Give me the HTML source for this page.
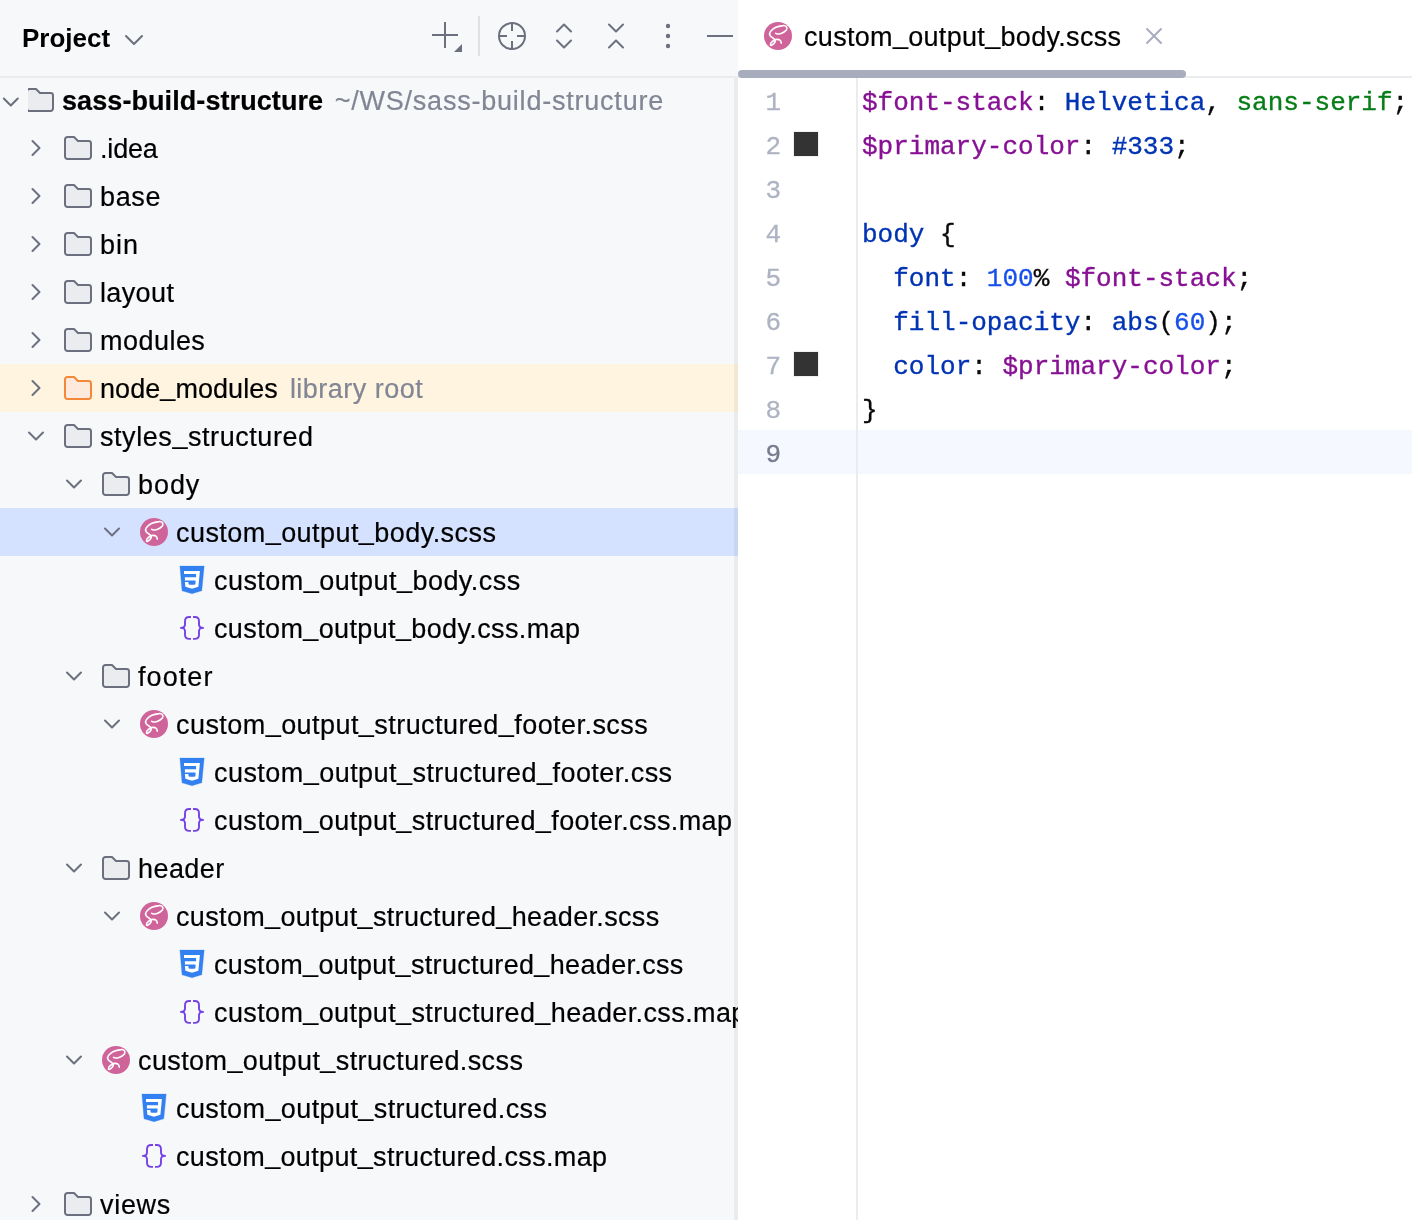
<!DOCTYPE html>
<html><head><meta charset="utf-8"><style>
html,body{margin:0;padding:0;width:1412px;height:1220px;overflow:hidden;background:#fff}
body{position:relative;font-family:"Liberation Sans",sans-serif;}
.aa{will-change:transform}
.u{position:relative;top:-3px}
#left{position:absolute;left:0;top:0;width:738px;height:1220px;background:#F7F8FA;overflow:hidden}
#tree{position:absolute;left:0;top:0;width:738px;height:1220px;overflow:hidden}
.bg{position:absolute;left:0;width:738px;height:48px}
.ic{position:absolute;overflow:visible}
.t{position:absolute;-webkit-text-stroke:0.2px currentColor;height:48px;line-height:48px;font-size:27px;color:#000;white-space:pre;letter-spacing:0.37px}
.t.b{font-weight:bold;letter-spacing:0px}
.g{color:#818594;font-weight:normal;letter-spacing:0.67px}
.ln{position:absolute;left:741px;width:40px;-webkit-text-stroke:0.3px currentColor;text-align:right;height:44px;line-height:44px;font-family:"Liberation Mono",monospace;font-size:26px}
.code{position:absolute;left:862px;-webkit-text-stroke:0.35px currentColor;height:44px;line-height:44px;font-family:"Liberation Mono",monospace;font-size:26px;white-space:pre;color:#080808}
</style></head><body>
<div id="left">
  <div class="aa" style="position:absolute;left:22px;top:0;height:76px;line-height:76px;font-size:26px;font-weight:bold;color:#000">Project</div>
  <svg class="ic" style="left:0;top:0" width="738" height="76">
    <path d="M126 36L134 44L142 36" fill="none" stroke="#6C707E" stroke-width="2" stroke-linecap="round" stroke-linejoin="round"/>
    <path d="M432 35H458M445 22V48" stroke="#6C707E" stroke-width="2"/>
    <path d="M462 44V52H454Z" fill="#6C707E"/>
    <rect x="478" y="16" width="2" height="40" fill="#DFE1E5"/>
    <circle cx="512" cy="36" r="13" fill="none" stroke="#6C707E" stroke-width="2"/>
    <path d="M512 23V31M512 41V49M499 36H507M517 36H525" stroke="#6C707E" stroke-width="2"/>
    <path d="M557 31.5L564 24.5L571 31.5M557 40.5L564 47.5L571 40.5" fill="none" stroke="#6C707E" stroke-width="2" stroke-linecap="round" stroke-linejoin="round"/>
    <path d="M609 24.5L616 31.5L623 24.5M609 47.5L616 40.5L623 47.5" fill="none" stroke="#6C707E" stroke-width="2" stroke-linecap="round" stroke-linejoin="round"/>
    <circle cx="668" cy="26" r="2.2" fill="#6C707E"/><circle cx="668" cy="36" r="2.2" fill="#6C707E"/><circle cx="668" cy="46" r="2.2" fill="#6C707E"/>
    <path d="M707 36H733" stroke="#6C707E" stroke-width="2"/>
  </svg>
  <div id="tree">
  <svg class="ic" style="left:24px;top:84px;clip-path:inset(0 0 0 4px);" width="32" height="32" viewBox="0 0 16 16"><path d="M1.5 3.7a1.2 1.2 0 0 1 1.2-1.2H6L8 4.5H13.3a1.2 1.2 0 0 1 1.2 1.2V12.3a1.2 1.2 0 0 1-1.2 1.2H2.7a1.2 1.2 0 0 1-1.2-1.2Z" fill="#EBECF0" stroke="#6C707E" stroke-width="1" stroke-linejoin="round"/></svg><div class="t b aa" style="left:62px;top:77px;letter-spacing:0.08px">sass-build-structure<span class="g" style="margin-left:11.5px;letter-spacing:0.78px">~/WS/sass-build-structure</span></div><svg class="ic" style="left:62px;top:132px;" width="32" height="32" viewBox="0 0 16 16"><path d="M1.5 3.7a1.2 1.2 0 0 1 1.2-1.2H6L8 4.5H13.3a1.2 1.2 0 0 1 1.2 1.2V12.3a1.2 1.2 0 0 1-1.2 1.2H2.7a1.2 1.2 0 0 1-1.2-1.2Z" fill="#EBECF0" stroke="#6C707E" stroke-width="1" stroke-linejoin="round"/></svg><div class="t aa" style="left:100px;top:125px;letter-spacing:-0.18px">.idea</div><svg class="ic" style="left:62px;top:180px;" width="32" height="32" viewBox="0 0 16 16"><path d="M1.5 3.7a1.2 1.2 0 0 1 1.2-1.2H6L8 4.5H13.3a1.2 1.2 0 0 1 1.2 1.2V12.3a1.2 1.2 0 0 1-1.2 1.2H2.7a1.2 1.2 0 0 1-1.2-1.2Z" fill="#EBECF0" stroke="#6C707E" stroke-width="1" stroke-linejoin="round"/></svg><div class="t aa" style="left:100px;top:173px;letter-spacing:0.64px">base</div><svg class="ic" style="left:62px;top:228px;" width="32" height="32" viewBox="0 0 16 16"><path d="M1.5 3.7a1.2 1.2 0 0 1 1.2-1.2H6L8 4.5H13.3a1.2 1.2 0 0 1 1.2 1.2V12.3a1.2 1.2 0 0 1-1.2 1.2H2.7a1.2 1.2 0 0 1-1.2-1.2Z" fill="#EBECF0" stroke="#6C707E" stroke-width="1" stroke-linejoin="round"/></svg><div class="t aa" style="left:100px;top:221px;letter-spacing:1.0px">bin</div><svg class="ic" style="left:62px;top:276px;" width="32" height="32" viewBox="0 0 16 16"><path d="M1.5 3.7a1.2 1.2 0 0 1 1.2-1.2H6L8 4.5H13.3a1.2 1.2 0 0 1 1.2 1.2V12.3a1.2 1.2 0 0 1-1.2 1.2H2.7a1.2 1.2 0 0 1-1.2-1.2Z" fill="#EBECF0" stroke="#6C707E" stroke-width="1" stroke-linejoin="round"/></svg><div class="t aa" style="left:100px;top:269px;letter-spacing:0.37px">layout</div><svg class="ic" style="left:62px;top:324px;" width="32" height="32" viewBox="0 0 16 16"><path d="M1.5 3.7a1.2 1.2 0 0 1 1.2-1.2H6L8 4.5H13.3a1.2 1.2 0 0 1 1.2 1.2V12.3a1.2 1.2 0 0 1-1.2 1.2H2.7a1.2 1.2 0 0 1-1.2-1.2Z" fill="#EBECF0" stroke="#6C707E" stroke-width="1" stroke-linejoin="round"/></svg><div class="t aa" style="left:100px;top:317px;letter-spacing:0.47px">modules</div><div class="bg" style="top:364px;background:#FEF4E0"></div><svg class="ic" style="left:62px;top:372px;" width="32" height="32" viewBox="0 0 16 16"><path d="M1.5 3.7a1.2 1.2 0 0 1 1.2-1.2H6L8 4.5H13.3a1.2 1.2 0 0 1 1.2 1.2V12.3a1.2 1.2 0 0 1-1.2 1.2H2.7a1.2 1.2 0 0 1-1.2-1.2Z" fill="#FDEADC" stroke="#F3883A" stroke-width="1" stroke-linejoin="round"/></svg><div class="t aa" style="left:100px;top:365px;letter-spacing:0.06px">node<span class="u">_</span>modules<span class="g" style="margin-left:12px;letter-spacing:0.49px">library root</span></div><svg class="ic" style="left:62px;top:420px;" width="32" height="32" viewBox="0 0 16 16"><path d="M1.5 3.7a1.2 1.2 0 0 1 1.2-1.2H6L8 4.5H13.3a1.2 1.2 0 0 1 1.2 1.2V12.3a1.2 1.2 0 0 1-1.2 1.2H2.7a1.2 1.2 0 0 1-1.2-1.2Z" fill="#EBECF0" stroke="#6C707E" stroke-width="1" stroke-linejoin="round"/></svg><div class="t aa" style="left:100px;top:413px;letter-spacing:0.56px">styles<span class="u">_</span>structured</div><svg class="ic" style="left:100px;top:468px;" width="32" height="32" viewBox="0 0 16 16"><path d="M1.5 3.7a1.2 1.2 0 0 1 1.2-1.2H6L8 4.5H13.3a1.2 1.2 0 0 1 1.2 1.2V12.3a1.2 1.2 0 0 1-1.2 1.2H2.7a1.2 1.2 0 0 1-1.2-1.2Z" fill="#EBECF0" stroke="#6C707E" stroke-width="1" stroke-linejoin="round"/></svg><div class="t aa" style="left:138px;top:461px;letter-spacing:0.94px">body</div><div class="bg" style="top:508px;background:#D4E2FF"></div><svg class="ic" style="left:138px;top:516px" width="32" height="32" viewBox="0 0 16 16"><circle cx="8" cy="8" r="7" fill="#CF649A"/><path d="M6.8 6.7C8 7.5 11 6.5 12.2 5C13 3.8 12 2.6 10.5 2.8C8.5 3 5.5 4 4.2 5.8C3.2 7.2 4.2 8.3 5.5 9C6.8 9.8 7 10.5 6.2 11.5C5.5 12.4 4.5 13 4.2 12.5C3.9 11.8 5.5 10 7.2 9.7C8.5 9.5 9.8 10.3 9.6 11.6" fill="none" stroke="#fff" stroke-width="0.8" stroke-linecap="round"/></svg><div class="t aa" style="left:176px;top:509px;letter-spacing:0.44px">custom<span class="u">_</span>output<span class="u">_</span>body.scss</div><svg class="ic" style="left:176px;top:564px" width="32" height="32" viewBox="0 0 16 16"><path d="M1.95 1.05H14.1L12.9 13.4L8 14.85L3 13.4Z" fill="#3381F0" stroke="#3381F0" stroke-width="0.15" stroke-linejoin="round"/><path d="M4 3.5H11.95L11.2 11.4L8 12.35L4.7 11.4L4.45 9H6.2V9.6Q6.2 10.35 7 10.35H9Q9.75 10.35 9.75 9.6V8.3H4.45V6.6H10.05V5.05H4Z" fill="#fff"/></svg><div class="t aa" style="left:214px;top:557px;letter-spacing:0.45px">custom<span class="u">_</span>output<span class="u">_</span>body.css</div><svg class="ic" style="left:176px;top:612px" width="32" height="32" viewBox="0 0 16 16"><path d="M7.5 2.5H6.6C5.3 2.5 4.5 3.3 4.5 4.6V6.3C4.5 7.3 3.6 7.95 2.45 7.95C3.6 7.95 4.5 8.6 4.5 9.6V11.4C4.5 12.7 5.3 13.45 6.6 13.45H7.5M8.5 2.5H9.4C10.7 2.5 11.5 3.3 11.5 4.6V6.3C11.5 7.3 12.4 7.95 13.55 7.95C12.4 7.95 11.5 8.6 11.5 9.6V11.4C11.5 12.7 10.7 13.45 9.4 13.45H8.5" fill="none" stroke="#7442E8" stroke-width="0.95" stroke-linejoin="round"/></svg><div class="t aa" style="left:214px;top:605px;letter-spacing:0.37px">custom<span class="u">_</span>output<span class="u">_</span>body.css.map</div><svg class="ic" style="left:100px;top:660px;" width="32" height="32" viewBox="0 0 16 16"><path d="M1.5 3.7a1.2 1.2 0 0 1 1.2-1.2H6L8 4.5H13.3a1.2 1.2 0 0 1 1.2 1.2V12.3a1.2 1.2 0 0 1-1.2 1.2H2.7a1.2 1.2 0 0 1-1.2-1.2Z" fill="#EBECF0" stroke="#6C707E" stroke-width="1" stroke-linejoin="round"/></svg><div class="t aa" style="left:138px;top:653px;letter-spacing:1.07px">footer</div><svg class="ic" style="left:138px;top:708px" width="32" height="32" viewBox="0 0 16 16"><circle cx="8" cy="8" r="7" fill="#CF649A"/><path d="M6.8 6.7C8 7.5 11 6.5 12.2 5C13 3.8 12 2.6 10.5 2.8C8.5 3 5.5 4 4.2 5.8C3.2 7.2 4.2 8.3 5.5 9C6.8 9.8 7 10.5 6.2 11.5C5.5 12.4 4.5 13 4.2 12.5C3.9 11.8 5.5 10 7.2 9.7C8.5 9.5 9.8 10.3 9.6 11.6" fill="none" stroke="#fff" stroke-width="0.8" stroke-linecap="round"/></svg><div class="t aa" style="left:176px;top:701px;letter-spacing:0.44px">custom<span class="u">_</span>output<span class="u">_</span>structured<span class="u">_</span>footer.scss</div><svg class="ic" style="left:176px;top:756px" width="32" height="32" viewBox="0 0 16 16"><path d="M1.95 1.05H14.1L12.9 13.4L8 14.85L3 13.4Z" fill="#3381F0" stroke="#3381F0" stroke-width="0.15" stroke-linejoin="round"/><path d="M4 3.5H11.95L11.2 11.4L8 12.35L4.7 11.4L4.45 9H6.2V9.6Q6.2 10.35 7 10.35H9Q9.75 10.35 9.75 9.6V8.3H4.45V6.6H10.05V5.05H4Z" fill="#fff"/></svg><div class="t aa" style="left:214px;top:749px;letter-spacing:0.45px">custom<span class="u">_</span>output<span class="u">_</span>structured<span class="u">_</span>footer.css</div><svg class="ic" style="left:176px;top:804px" width="32" height="32" viewBox="0 0 16 16"><path d="M7.5 2.5H6.6C5.3 2.5 4.5 3.3 4.5 4.6V6.3C4.5 7.3 3.6 7.95 2.45 7.95C3.6 7.95 4.5 8.6 4.5 9.6V11.4C4.5 12.7 5.3 13.45 6.6 13.45H7.5M8.5 2.5H9.4C10.7 2.5 11.5 3.3 11.5 4.6V6.3C11.5 7.3 12.4 7.95 13.55 7.95C12.4 7.95 11.5 8.6 11.5 9.6V11.4C11.5 12.7 10.7 13.45 9.4 13.45H8.5" fill="none" stroke="#7442E8" stroke-width="0.95" stroke-linejoin="round"/></svg><div class="t aa" style="left:214px;top:797px;letter-spacing:0.4px">custom<span class="u">_</span>output<span class="u">_</span>structured<span class="u">_</span>footer.css.map</div><svg class="ic" style="left:100px;top:852px;" width="32" height="32" viewBox="0 0 16 16"><path d="M1.5 3.7a1.2 1.2 0 0 1 1.2-1.2H6L8 4.5H13.3a1.2 1.2 0 0 1 1.2 1.2V12.3a1.2 1.2 0 0 1-1.2 1.2H2.7a1.2 1.2 0 0 1-1.2-1.2Z" fill="#EBECF0" stroke="#6C707E" stroke-width="1" stroke-linejoin="round"/></svg><div class="t aa" style="left:138px;top:845px;letter-spacing:0.43px">header</div><svg class="ic" style="left:138px;top:900px" width="32" height="32" viewBox="0 0 16 16"><circle cx="8" cy="8" r="7" fill="#CF649A"/><path d="M6.8 6.7C8 7.5 11 6.5 12.2 5C13 3.8 12 2.6 10.5 2.8C8.5 3 5.5 4 4.2 5.8C3.2 7.2 4.2 8.3 5.5 9C6.8 9.8 7 10.5 6.2 11.5C5.5 12.4 4.5 13 4.2 12.5C3.9 11.8 5.5 10 7.2 9.7C8.5 9.5 9.8 10.3 9.6 11.6" fill="none" stroke="#fff" stroke-width="0.8" stroke-linecap="round"/></svg><div class="t aa" style="left:176px;top:893px;letter-spacing:0.34px">custom<span class="u">_</span>output<span class="u">_</span>structured<span class="u">_</span>header.scss</div><svg class="ic" style="left:176px;top:948px" width="32" height="32" viewBox="0 0 16 16"><path d="M1.95 1.05H14.1L12.9 13.4L8 14.85L3 13.4Z" fill="#3381F0" stroke="#3381F0" stroke-width="0.15" stroke-linejoin="round"/><path d="M4 3.5H11.95L11.2 11.4L8 12.35L4.7 11.4L4.45 9H6.2V9.6Q6.2 10.35 7 10.35H9Q9.75 10.35 9.75 9.6V8.3H4.45V6.6H10.05V5.05H4Z" fill="#fff"/></svg><div class="t aa" style="left:214px;top:941px;letter-spacing:0.34px">custom<span class="u">_</span>output<span class="u">_</span>structured<span class="u">_</span>header.css</div><svg class="ic" style="left:176px;top:996px" width="32" height="32" viewBox="0 0 16 16"><path d="M7.5 2.5H6.6C5.3 2.5 4.5 3.3 4.5 4.6V6.3C4.5 7.3 3.6 7.95 2.45 7.95C3.6 7.95 4.5 8.6 4.5 9.6V11.4C4.5 12.7 5.3 13.45 6.6 13.45H7.5M8.5 2.5H9.4C10.7 2.5 11.5 3.3 11.5 4.6V6.3C11.5 7.3 12.4 7.95 13.55 7.95C12.4 7.95 11.5 8.6 11.5 9.6V11.4C11.5 12.7 10.7 13.45 9.4 13.45H8.5" fill="none" stroke="#7442E8" stroke-width="0.95" stroke-linejoin="round"/></svg><div class="t aa" style="left:214px;top:989px;letter-spacing:0.38px">custom<span class="u">_</span>output<span class="u">_</span>structured<span class="u">_</span>header.css.map</div><svg class="ic" style="left:100px;top:1044px" width="32" height="32" viewBox="0 0 16 16"><circle cx="8" cy="8" r="7" fill="#CF649A"/><path d="M6.8 6.7C8 7.5 11 6.5 12.2 5C13 3.8 12 2.6 10.5 2.8C8.5 3 5.5 4 4.2 5.8C3.2 7.2 4.2 8.3 5.5 9C6.8 9.8 7 10.5 6.2 11.5C5.5 12.4 4.5 13 4.2 12.5C3.9 11.8 5.5 10 7.2 9.7C8.5 9.5 9.8 10.3 9.6 11.6" fill="none" stroke="#fff" stroke-width="0.8" stroke-linecap="round"/></svg><div class="t aa" style="left:138px;top:1037px;letter-spacing:0.4px">custom<span class="u">_</span>output<span class="u">_</span>structured.scss</div><svg class="ic" style="left:138px;top:1092px" width="32" height="32" viewBox="0 0 16 16"><path d="M1.95 1.05H14.1L12.9 13.4L8 14.85L3 13.4Z" fill="#3381F0" stroke="#3381F0" stroke-width="0.15" stroke-linejoin="round"/><path d="M4 3.5H11.95L11.2 11.4L8 12.35L4.7 11.4L4.45 9H6.2V9.6Q6.2 10.35 7 10.35H9Q9.75 10.35 9.75 9.6V8.3H4.45V6.6H10.05V5.05H4Z" fill="#fff"/></svg><div class="t aa" style="left:176px;top:1085px;letter-spacing:0.4px">custom<span class="u">_</span>output<span class="u">_</span>structured.css</div><svg class="ic" style="left:138px;top:1140px" width="32" height="32" viewBox="0 0 16 16"><path d="M7.5 2.5H6.6C5.3 2.5 4.5 3.3 4.5 4.6V6.3C4.5 7.3 3.6 7.95 2.45 7.95C3.6 7.95 4.5 8.6 4.5 9.6V11.4C4.5 12.7 5.3 13.45 6.6 13.45H7.5M8.5 2.5H9.4C10.7 2.5 11.5 3.3 11.5 4.6V6.3C11.5 7.3 12.4 7.95 13.55 7.95C12.4 7.95 11.5 8.6 11.5 9.6V11.4C11.5 12.7 10.7 13.45 9.4 13.45H8.5" fill="none" stroke="#7442E8" stroke-width="0.95" stroke-linejoin="round"/></svg><div class="t aa" style="left:176px;top:1133px;letter-spacing:0.35px">custom<span class="u">_</span>output<span class="u">_</span>structured.css.map</div><svg class="ic" style="left:62px;top:1188px;" width="32" height="32" viewBox="0 0 16 16"><path d="M1.5 3.7a1.2 1.2 0 0 1 1.2-1.2H6L8 4.5H13.3a1.2 1.2 0 0 1 1.2 1.2V12.3a1.2 1.2 0 0 1-1.2 1.2H2.7a1.2 1.2 0 0 1-1.2-1.2Z" fill="#EBECF0" stroke="#6C707E" stroke-width="1" stroke-linejoin="round"/></svg><div class="t aa" style="left:100px;top:1181px;letter-spacing:0.7px">views</div>
  <svg class="ic" style="left:0;top:0" width="736" height="1220"><path d="M3.8000000000000007 98.5L10.8 105.5L17.8 98.5" fill="none" stroke="#6C707E" stroke-width="2" stroke-linecap="round" stroke-linejoin="round"/><path d="M32.5 141L39.5 148L32.5 155" fill="none" stroke="#6C707E" stroke-width="2" stroke-linecap="round" stroke-linejoin="round"/><path d="M32.5 189L39.5 196L32.5 203" fill="none" stroke="#6C707E" stroke-width="2" stroke-linecap="round" stroke-linejoin="round"/><path d="M32.5 237L39.5 244L32.5 251" fill="none" stroke="#6C707E" stroke-width="2" stroke-linecap="round" stroke-linejoin="round"/><path d="M32.5 285L39.5 292L32.5 299" fill="none" stroke="#6C707E" stroke-width="2" stroke-linecap="round" stroke-linejoin="round"/><path d="M32.5 333L39.5 340L32.5 347" fill="none" stroke="#6C707E" stroke-width="2" stroke-linecap="round" stroke-linejoin="round"/><path d="M32.5 381L39.5 388L32.5 395" fill="none" stroke="#6C707E" stroke-width="2" stroke-linecap="round" stroke-linejoin="round"/><path d="M29 432.5L36 439.5L43 432.5" fill="none" stroke="#6C707E" stroke-width="2" stroke-linecap="round" stroke-linejoin="round"/><path d="M67 480.5L74 487.5L81 480.5" fill="none" stroke="#6C707E" stroke-width="2" stroke-linecap="round" stroke-linejoin="round"/><path d="M105 528.5L112 535.5L119 528.5" fill="none" stroke="#6C707E" stroke-width="2" stroke-linecap="round" stroke-linejoin="round"/><path d="M67 672.5L74 679.5L81 672.5" fill="none" stroke="#6C707E" stroke-width="2" stroke-linecap="round" stroke-linejoin="round"/><path d="M105 720.5L112 727.5L119 720.5" fill="none" stroke="#6C707E" stroke-width="2" stroke-linecap="round" stroke-linejoin="round"/><path d="M67 864.5L74 871.5L81 864.5" fill="none" stroke="#6C707E" stroke-width="2" stroke-linecap="round" stroke-linejoin="round"/><path d="M105 912.5L112 919.5L119 912.5" fill="none" stroke="#6C707E" stroke-width="2" stroke-linecap="round" stroke-linejoin="round"/><path d="M67 1056.5L74 1063.5L81 1056.5" fill="none" stroke="#6C707E" stroke-width="2" stroke-linecap="round" stroke-linejoin="round"/><path d="M32.5 1197L39.5 1204L32.5 1211" fill="none" stroke="#6C707E" stroke-width="2" stroke-linecap="round" stroke-linejoin="round"/></svg>
  </div>
  <div style="position:absolute;left:0;top:76px;width:738px;height:2px;background:#EBECF0"></div>
  <div style="position:absolute;left:734px;top:78px;width:4px;height:1142px;background:rgba(0,0,0,0.05)"></div>
</div>
<div id="editor" style="position:absolute;left:738px;top:0;width:674px;height:1220px;background:#fff">
</div>
<div style="position:absolute;left:738px;top:76px;width:674px;height:2px;background:#EBECF0"></div>
<div style="position:absolute;left:738px;top:70px;width:448px;height:8px;background:#A8ADBD;border-radius:4px"></div>
<svg class="ic" style="left:762px;top:20px" width="32" height="32" viewBox="0 0 16 16"><circle cx="8" cy="8" r="7" fill="#CF649A"/><path d="M6.8 6.7C8 7.5 11 6.5 12.2 5C13 3.8 12 2.6 10.5 2.8C8.5 3 5.5 4 4.2 5.8C3.2 7.2 4.2 8.3 5.5 9C6.8 9.8 7 10.5 6.2 11.5C5.5 12.4 4.5 13 4.2 12.5C3.9 11.8 5.5 10 7.2 9.7C8.5 9.5 9.8 10.3 9.6 11.6" fill="none" stroke="#fff" stroke-width="0.8" stroke-linecap="round"/></svg>
<div class="aa" style="position:absolute;left:804px;top:0;height:75px;line-height:75px;font-size:27px;color:#000;white-space:pre;letter-spacing:0.31px;-webkit-text-stroke:0.2px #000">custom<span class="u">_</span>output<span class="u">_</span>body.scss</div>
<svg class="ic" style="left:0;top:0" width="1412" height="76"><path d="M1147 29L1161 43M1161 29L1147 43" stroke="#A8ADBD" stroke-width="2" stroke-linecap="round"/></svg>
<div style="position:absolute;left:738px;top:430px;width:674px;height:44px;background:#F5F8FE"></div>
<div style="position:absolute;left:856px;top:78px;width:2px;height:1142px;background:#EBECF0"></div>
<div style="position:absolute;left:794px;top:132px;width:24px;height:24px;background:#333;box-shadow:0 0 0 1px rgba(0,0,0,0.06)"></div>
<div style="position:absolute;left:794px;top:352px;width:24px;height:24px;background:#333;box-shadow:0 0 0 1px rgba(0,0,0,0.06)"></div>
<div class="ln aa" style="top:81px;color:#AEB3C2">1</div><div class="code aa" style="top:81px"><span style="color:#871094">$font-stack</span><span style="color:#080808">: </span><span style="color:#0033B3">Helvetica</span><span style="color:#080808">, </span><span style="color:#067D17">sans-serif</span><span style="color:#080808">;</span></div><div class="ln aa" style="top:125px;color:#AEB3C2">2</div><div class="code aa" style="top:125px"><span style="color:#871094">$primary-color</span><span style="color:#080808">: </span><span style="color:#0033B3">#333</span><span style="color:#080808">;</span></div><div class="ln aa" style="top:169px;color:#AEB3C2">3</div><div class="code aa" style="top:169px"></div><div class="ln aa" style="top:213px;color:#AEB3C2">4</div><div class="code aa" style="top:213px"><span style="color:#0033B3">body</span><span style="color:#080808"> {</span></div><div class="ln aa" style="top:257px;color:#AEB3C2">5</div><div class="code aa" style="top:257px">  <span style="color:#0033B3">font</span><span style="color:#080808">: </span><span style="color:#1750EB">100</span><span style="color:#080808">% </span><span style="color:#871094">$font-stack</span><span style="color:#080808">;</span></div><div class="ln aa" style="top:301px;color:#AEB3C2">6</div><div class="code aa" style="top:301px">  <span style="color:#0033B3">fill-opacity</span><span style="color:#080808">: </span><span style="color:#0033B3">abs</span><span style="color:#080808">(</span><span style="color:#1750EB">60</span><span style="color:#080808">);</span></div><div class="ln aa" style="top:345px;color:#AEB3C2">7</div><div class="code aa" style="top:345px">  <span style="color:#0033B3">color</span><span style="color:#080808">: </span><span style="color:#871094">$primary-color</span><span style="color:#080808">;</span></div><div class="ln aa" style="top:389px;color:#AEB3C2">8</div><div class="code aa" style="top:389px"><span style="color:#080808">}</span></div><div class="ln aa" style="top:433px;color:#767A8A">9</div><div class="code aa" style="top:433px"></div>
</body></html>
